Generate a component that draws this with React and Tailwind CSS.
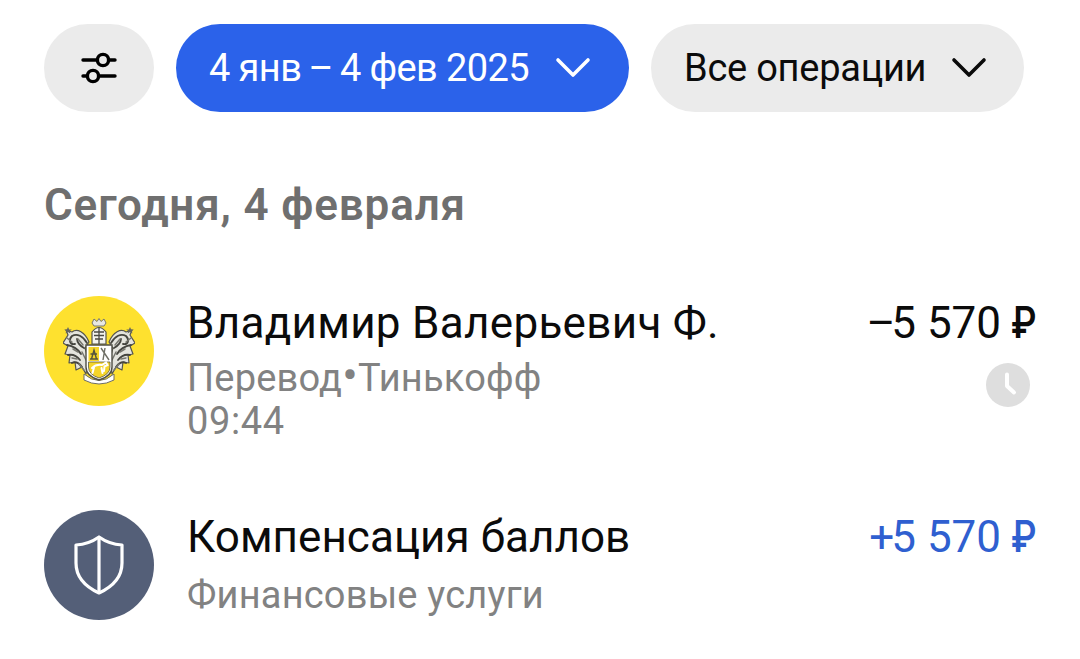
import React from 'react';

const Chevron = ({ className }) => (
  <svg viewBox="0 0 36 24" className={className} fill="none" stroke="currentColor" strokeWidth="3.6" strokeLinecap="round" strokeLinejoin="round">
    <path d="M3 4 L18 19 L33 4" />
  </svg>
);

const FilterIcon = () => (
  <svg viewBox="0 0 36 32" className="w-[36px] h-[32px] text-black" fill="none" stroke="currentColor" strokeWidth="3.4" strokeLinecap="round">
    <path d="M2 8 H16 M28 8 H34 M2 24 H6 M18 24 H34" />
    <circle cx="22" cy="8" r="5.6" />
    <circle cx="12" cy="24" r="5.6" />
  </svg>
);

const ClockBadge = () => (
  <svg viewBox="0 0 44 44" className="w-[44px] h-[44px]">
    <circle cx="22" cy="22" r="22" fill="#dedede" />
    <path d="M21 11.5 V23 L28 29.5" fill="none" stroke="#fff" strokeWidth="4" strokeLinecap="round" strokeLinejoin="round" />
  </svg>
);

const Wing = () => (
  <g>
    <path d="M26 24 C22 14 14 10 9 14 L3 12 L5 17 L0 25 L5 28 L2 36 L7 37 L6 45 L12 44 L13 52 L19 49 L23 56 L25 40 L22 30 Z" fill="#e4e4dd" stroke="#55554e" strokeWidth="1.2" strokeLinejoin="round" />
    <path d="M24 25 C20 18 14 15 9 18 C5 22 7 27 12 26 M4 27 C10 28 15 31 18 36 M5 37 C10 36 14 38 17 42 M9 45 C13 43 16 45 19 49 M21 30 C17 28 14 24 14 21" fill="none" stroke="#45453f" strokeWidth="1.8" strokeLinecap="round" />
    <path d="M15 21 L20 27 M10 31 L15 34 M9 40 L14 41 M19 34 L23 42 M16 46 L21 52 M4 20 L9 24" fill="none" stroke="#77776f" strokeWidth="1.5" strokeLinecap="round" />
    <path d="M5 9 L6.2 11.4 L8.8 11.4 L6.8 13 L7.4 15.4 L5 14 L2.6 15.4 L3.2 13 L1.2 11.4 L3.8 11.4 Z" fill="#66665e" />
  </g>
);

const TinkoffLogo = () => (
  <div className="w-[110px] h-[110px] rounded-full bg-[#fee12f] flex items-center justify-center shrink-0">
    <svg viewBox="0 0 72 67" className="w-[72px] h-[67px]">
      <Wing />
      <g transform="translate(72 0) scale(-1 1)"><Wing /></g>
      {/* helmet and crown */}
      <path d="M29 5 L31 1 L34 3.5 L36 0.5 L38 3.5 L41 1 L43 5 L41 8 H31 Z" fill="#e8e8e0" stroke="#77776f" strokeWidth="1" />
      <path d="M29 26 V14 Q36 5 43 14 V26 Z" fill="#f4f4ee" stroke="#55554e" strokeWidth="1.2" />
      <path d="M31 14 H41 M31 17.5 H41 M36 9 V26 M32 21 H40" stroke="#4a4a44" strokeWidth="1.3" />
      {/* ribbon */}
      <path d="M21 56 Q36 69 51 56 L51 62 Q36 70 21 62 Z" fill="#fff" stroke="#6c6c64" strokeWidth="1" />
      {/* shield */}
      <path d="M23 27 H49 V49 Q49 58 36 62 Q23 58 23 49 Z" fill="#fff" stroke="#4f4f46" strokeWidth="1.4" />
      <path d="M25.5 29 H36 V43 H25.5 Z" fill="#f5d52a" />
      <path d="M25.5 44 H47 V49 Q47 56.5 36 60 Q25.5 56.5 25.5 49 Z" fill="#f5d52a" stroke="#5b5a48" strokeWidth="0.8" />
      <path d="M27 41 H35 M28.5 41 L31 32 L33.5 41 M27.5 36 H34" fill="none" stroke="#55543f" strokeWidth="1.4" />
      <path d="M38 30 L46 42 M42 30 L40 42" fill="none" stroke="#6f6f66" strokeWidth="1.4" />
      <path d="M29 50 Q33 46 39 47 L43 44.5 L44.5 47 L41.5 48.5 L41 53 M31 49.5 L29.5 55 M38.5 50 L39.5 55" fill="none" stroke="#fff" strokeWidth="2" strokeLinecap="round" />
    </svg>
  </div>
);

const ShieldLogo = () => (
  <div className="w-[110px] h-[110px] rounded-full bg-[#545f78] flex items-center justify-center shrink-0">
    <svg viewBox="0 0 50 60" className="w-[50px] h-[60px]" fill="none" stroke="#fff" strokeWidth="3.2" strokeLinejoin="round">
      <path d="M25 2 C18 7 10 9.5 2 10 V28 C2 43 12 52 25 58 C38 52 48 43 48 28 V10 C40 9.5 32 7 25 2 Z" />
      <path d="M25 2 V58" />
    </svg>
  </div>
);

const Operation = ({ logo, title, sub, time, sign, signClass, positive, pending, titleClass, subClass }) => (
  <div className="flex items-start">
    {logo}
    <div className="ml-[33px] flex-1">
      <div className={`text-[44px] leading-[54px] text-[#0b0b0b] ${titleClass}`}>{title}</div>
      <div className={`text-[38px] leading-[45px] text-[#828282] ${subClass}`}>{sub}</div>
      {time && <div className="text-[38px] leading-[40px] text-[#828282] tracking-[0.6px]">{time}</div>}
    </div>
    <div className="flex flex-col items-end">
      <div className={`text-[44px] leading-[54px] font-[450] ${positive ? 'text-[#2f5fd0]' : 'text-[#0b0b0b]'}`}>
        <span className={signClass}>{sign}</span>5 570 <span className="inline-block w-[30px] ml-[-6px] font-medium scale-x-[0.82] origin-right">₽</span>
      </div>
      {pending && <div className="mt-[13px] mr-[6px]"><ClockBadge /></div>}
    </div>
  </div>
);

export default function App() {
  return (
    <div className="w-[1080px] h-[659px] bg-white overflow-hidden pl-[44px] pr-[44px] pt-[24px] font-['Roboto',sans-serif]">
      <div className="flex gap-[22px]">
        <div className="w-[110px] h-[88px] rounded-[44px] bg-[#ebebeb] flex items-center justify-center">
          <FilterIcon />
        </div>
        <div className="w-[453px] h-[88px] rounded-[44px] bg-[#2b62ea] text-white flex items-center pl-[33px]">
          <span className="text-[38px] tracking-[-0.6px]">4 янв{'\u2009'}–{'\u2009'}4 фев 2025</span>
          <Chevron className="w-[36px] h-[24px] ml-[26px] text-white" />
        </div>
        <div className="w-[373px] h-[88px] rounded-[44px] bg-[#ebebeb] text-[#0b0b0b] flex items-center pl-[33px]">
          <span className="text-[38px] tracking-[-0.25px]">Все операции</span>
          <Chevron className="w-[36px] h-[24px] ml-[25px]" />
        </div>
      </div>
      <div className="mt-[68px] text-[44px] leading-[50px] font-semibold tracking-[0.85px] text-[#6f6f6f]">Сегодня, 4 февраля</div>
      <div className="mt-[66px]">
        <Operation
          logo={<TinkoffLogo />}
          title="Владимир Валерьевич Ф."
          titleClass="tracking-[0.3px]"
          sub={<>Перевод<span className="text-[46px] leading-[0]">•</span>Тинькофф</>}
          subClass="mt-[6px] tracking-[0.2px]"
          time="09:44"
          sign="–"
          signClass="tracking-[-4px]"
          pending
        />
      </div>
      <div className="mt-[69px]">
        <Operation
          logo={<ShieldLogo />}
          title="Компенсация баллов"
          titleClass="tracking-[0.05px]"
          sub="Финансовые услуги"
          subClass="mt-[9px] tracking-[0.2px]"
          sign="+"
          signClass="tracking-[-3px]"
          positive
        />
      </div>
    </div>
  );
}
